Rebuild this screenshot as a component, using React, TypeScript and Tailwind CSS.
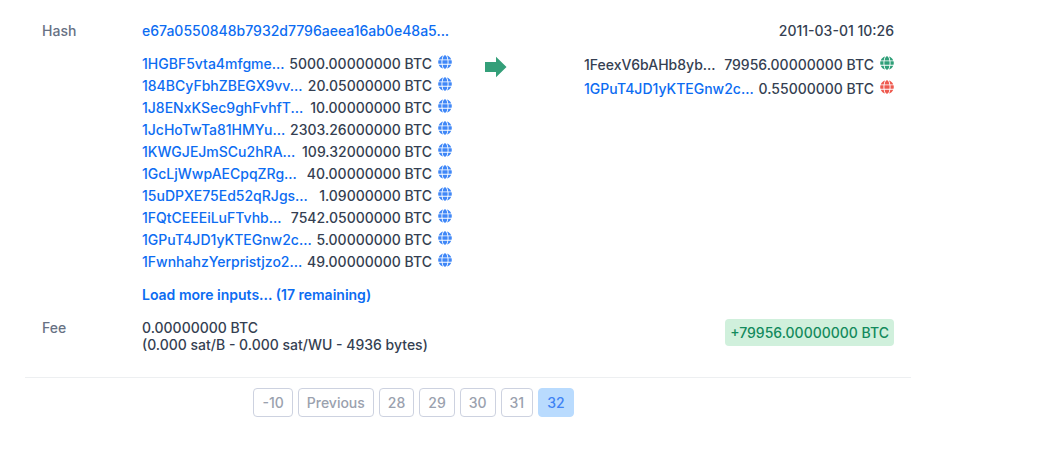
import { FaGlobe } from 'react-icons/fa';

type Entry = { address: string; amount: string; tone: string; linked?: boolean };

const blue = 'text-[#3f87f7]';

const inputs: Entry[] = [
  { address: '1HGBF5vta4mfgme...', amount: '5000.00000000 BTC', tone: blue },
  { address: '184BCyFbhZBEGX9vv...', amount: '20.05000000 BTC', tone: blue },
  { address: '1J8ENxKSec9ghFvhfT...', amount: '10.00000000 BTC', tone: blue },
  { address: '1JcHoTwTa81HMYu...', amount: '2303.26000000 BTC', tone: blue },
  { address: '1KWGJEJmSCu2hRA...', amount: '109.32000000 BTC', tone: blue },
  { address: '1GcLjWwpAECpqZRg...', amount: '40.00000000 BTC', tone: blue },
  { address: '15uDPXE75Ed52qRJgs...', amount: '1.09000000 BTC', tone: blue },
  { address: '1FQtCEEEiLuFTvhb...', amount: '7542.05000000 BTC', tone: blue },
  { address: '1GPuT4JD1yKTEGnw2c...', amount: '5.00000000 BTC', tone: blue },
  { address: '1FwnhahzYerpristjzo2...', amount: '49.00000000 BTC', tone: blue },
];

const outputs: Entry[] = [
  { address: '1FeexV6bAHb8yb...', amount: '79956.00000000 BTC', tone: 'text-[#2f9f78]', linked: false },
  { address: '1GPuT4JD1yKTEGnw2c...', amount: '0.55000000 BTC', tone: 'text-[#ee5a4f]' },
];

const pages = ['-10', 'Previous', '28', '29', '30', '31', '32'];

function EntryRow({ entry }: { entry: Entry }) {
  return (
    <li className="flex items-center justify-between whitespace-nowrap">
      {entry.linked === false ? (
        <span>{entry.address}</span>
      ) : (
        <a href="#address" className="text-[#0c6cf2]">{entry.address}</a>
      )}
      <span className="flex items-center gap-1.5">
        {entry.amount}
        <FaGlobe className={`mb-1 h-3.5 w-3.5 ${entry.tone}`} aria-hidden="true" />
      </span>
    </li>
  );
}

export default function App() {
  return (
    <main className="bg-white px-[25px] pt-5 pb-8 font-['Inter',sans-serif] text-sm font-medium text-[#353f52]">
      <div className="w-full max-w-[886px]">
        <section className="grid grid-cols-[100px_minmax(0,310px)_minmax(0,132px)_minmax(0,310px)] px-[17px]">
          <h2 className="leading-[22px] text-[#677184]">Hash</h2>
          <a href="#transaction" className="leading-[22px] whitespace-nowrap text-[#0c6cf2]">
            e67a0550848b7932d7796aeea16ab0e48a5...
          </a>
          <time dateTime="2011-03-01T10:26" className="col-span-2 text-right leading-[22px]">
            2011-03-01 10:26
          </time>

          <div className="col-start-2 mt-[11px] leading-[22px]">
            <ul>
              {inputs.map((entry) => <EntryRow key={entry.address} entry={entry} />)}
            </ul>
            <button type="button" className="mt-[11px] block font-semibold text-[#0c6cf2]">
              Load more inputs... (17 remaining)
            </button>
          </div>
          <svg viewBox="0 0 22 22" className="mt-[14px] ml-[33px] h-[22px] w-[22px]" aria-hidden="true">
            <path d="M0 6h11V0.8L21.5 11 11 21.2V16H0z" fill="#349f79" />
          </svg>
          <ul className="mt-[11px] leading-6">
            {outputs.map((entry) => <EntryRow key={entry.address} entry={entry} />)}
          </ul>

          <h2 className="mt-[13px] leading-[17px] text-[#677184]">Fee</h2>
          <p className="col-span-2 mt-[13px] leading-[17px]">
            0.00000000 BTC
            <br />
            (0.000 sat/B - 0.000 sat/WU - 4936 bytes)
          </p>
          <div className="mt-[13px] flex items-start justify-end">
            <span className="rounded bg-[#d0f0dc] px-[5px] py-[5px] leading-[17px] whitespace-nowrap text-[#138a5c]">
              +79956.00000000 BTC
            </span>
          </div>
        </section>
        <hr className="mt-6 border-[#edeff1]" />
        <nav aria-label="Pages" className="mt-2.5 flex justify-center gap-[5px] pr-[109px]">
          {pages.map((page) => (
            <button
              key={page}
              type="button"
              className={
                page === '32'
                  ? 'rounded border border-[#b9dbfe] bg-[#b9dbfe] px-2 py-[5px] leading-[17px] text-[#3f83f4]'
                  : 'rounded border border-[#cdd2e0] bg-white px-2 py-[5px] leading-[17px] text-[#9aa1ae]'
              }
            >
              {page}
            </button>
          ))}
        </nav>
      </div>
    </main>
  );
}
